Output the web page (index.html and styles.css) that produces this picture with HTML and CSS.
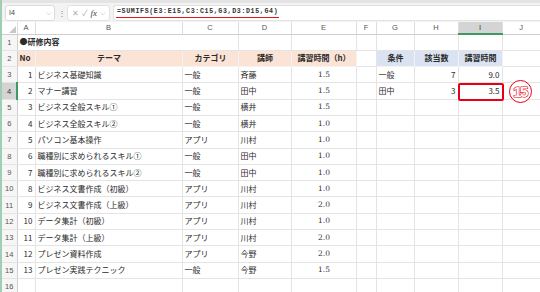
FILE: index.html
```html
<!DOCTYPE html>
<html lang="ja">
<head>
<meta charset="utf-8">
<link rel="stylesheet" href="styles.css">
</head>
<body>
<div class="app">
  <div class="topband"></div>
  <div class="fbar">
    <div class="namebox"><span>I4</span><span class="chev">⌵</span></div>
    <div class="dots">⋮</div>
    <div class="fxbox"><span class="ic">✕</span><span class="ic">✓</span><span class="fx">fx</span><span class="chev">⌵</span></div>
    <div class="formula"><span class="ftext">=SUMIFS(E3:E15,C3:C15,G3,D3:D15,G4)</span></div>
  </div>
  <table class="sheet">
    <colgroup>
      <col class="w-rh"><col class="w-a"><col class="w-b"><col class="w-c"><col class="w-d"><col class="w-e"><col class="w-f"><col class="w-g"><col class="w-h"><col class="w-i"><col class="w-j">
    </colgroup>
    <thead>
      <tr class="colhead">
        <th class="corner"><span class="tri"></span></th><th>A</th><th>B</th><th>C</th><th>D</th><th>E</th><th>F</th><th>G</th><th>H</th><th class="sel">I</th><th>J</th>
      </tr>
    </thead>
    <tbody>
      <tr><th class="rh">1</th><td colspan="2" class="title">●研修内容</td><td></td><td></td><td></td><td></td><td></td><td></td><td></td><td></td></tr>
      <tr class="hdr"><th class="rh">2</th><td class="pe l">No</td><td class="pe c">テーマ</td><td class="pe c">カテゴリ</td><td class="pe c">講師</td><td class="pe c">講習時間（h）</td><td></td><td class="bl c">条件</td><td class="bl c">該当数</td><td class="bl c">講習時間</td><td></td></tr>
      <tr><th class="rh">3</th><td class="r">1</td><td>ビジネス基礎知識</td><td>一般</td><td>斉藤</td><td class="num">1.5</td><td></td><td>一般</td><td class="r">7</td><td class="r">9.0</td><td></td></tr>
      <tr><th class="rh selr">4</th><td class="r">2</td><td>マナー講習</td><td>一般</td><td>田中</td><td class="num">1.5</td><td></td><td>田中</td><td class="r">3</td><td class="r mark">3.5<span class="redbox"></span><span class="badge">15</span></td><td></td></tr>
      <tr><th class="rh">5</th><td class="r">3</td><td>ビジネス全般スキル①</td><td>一般</td><td>横井</td><td class="num">1.5</td><td></td><td></td><td></td><td></td><td></td></tr>
      <tr><th class="rh">6</th><td class="r">4</td><td>ビジネス全般スキル②</td><td>一般</td><td>横井</td><td class="num">1.0</td><td></td><td></td><td></td><td></td><td></td></tr>
      <tr><th class="rh">7</th><td class="r">5</td><td>パソコン基本操作</td><td>アプリ</td><td>川村</td><td class="num">1.0</td><td></td><td></td><td></td><td></td><td></td></tr>
      <tr><th class="rh">8</th><td class="r">6</td><td>職種別に求められるスキル①</td><td>一般</td><td>田中</td><td class="num">1.0</td><td></td><td></td><td></td><td></td><td></td></tr>
      <tr><th class="rh">9</th><td class="r">7</td><td>職種別に求められるスキル②</td><td>一般</td><td>田中</td><td class="num">1.0</td><td></td><td></td><td></td><td></td><td></td></tr>
      <tr><th class="rh">10</th><td class="r">8</td><td>ビジネス文書作成（初級）</td><td>アプリ</td><td>川村</td><td class="num">1.0</td><td></td><td></td><td></td><td></td><td></td></tr>
      <tr><th class="rh">11</th><td class="r">9</td><td>ビジネス文書作成（上級）</td><td>アプリ</td><td>川村</td><td class="num">2.0</td><td></td><td></td><td></td><td></td><td></td></tr>
      <tr><th class="rh">12</th><td class="r">10</td><td>データ集計（初級）</td><td>アプリ</td><td>川村</td><td class="num">1.0</td><td></td><td></td><td></td><td></td><td></td></tr>
      <tr><th class="rh">13</th><td class="r">11</td><td>データ集計（上級）</td><td>アプリ</td><td>川村</td><td class="num">2.0</td><td></td><td></td><td></td><td></td><td></td></tr>
      <tr><th class="rh">14</th><td class="r">12</td><td>プレゼン資料作成</td><td>アプリ</td><td>今野</td><td class="num">2.0</td><td></td><td></td><td></td><td></td><td></td></tr>
      <tr><th class="rh">15</th><td class="r">13</td><td>プレゼン実践テクニック</td><td>一般</td><td>今野</td><td class="num">1.5</td><td></td><td></td><td></td><td></td><td></td></tr>
      <tr><th class="rh">16</th><td></td><td></td><td></td><td></td><td></td><td></td><td></td><td></td><td></td><td></td></tr>
    </tbody>
  </table>
</div>
</body>
</html>
```
FILE: styles.css
```css
* { box-sizing: border-box; }
html, body { margin: 0; padding: 0; background: #fff; }
body {
  width: 540px;
  height: 292px;
  overflow: hidden;
  font-family: "Noto Sans CJK JP", "Noto Sans", sans-serif;
  color: #2b2b2b;
}
.app {
  border-left: 2px solid #9fcfb2;
  height: 292px;
  display: flex;
  flex-direction: column;
  background: #f3f3f3;
}
.topband {
  height: 3px;
  background: #e4e4e4;
  flex: none;
}
.fbar {
  height: 19px;
  flex: none;
  display: flex;
  align-items: center;
  padding: 0 0 0 3px;
  gap: 3px;
  font-size: 7px;
  color: #555;
}
.namebox {
  width: 50px;
  height: 16px;
  background: #fff;
  border: 1px solid #dcdcdc;
  border-radius: 3px;
  display: flex;
  align-items: center;
  justify-content: space-between;
  padding: 0 3px 0 3px;
  font-family: "Liberation Sans", sans-serif;
  font-size: 7px;
  color: #444;
}
.chev { font-size: 7px; color: #666; line-height: 1; }
.dots { width: 6px; text-align: center; color: #777; font-size: 8px; }
.fxbox {
  width: 43px;
  height: 16px;
  background: #fff;
  border: 1px solid #e2e2e2;
  border-radius: 3px;
  display: flex;
  align-items: center;
  justify-content: space-around;
  padding: 0 2px;
  color: #9a9a9a;
}
.fxbox .ic { font-size: 8px; color: #b0b0b0; }
.fxbox .fx { font-family: "Liberation Serif", serif; font-style: italic; font-size: 9px; color: #444; }
.formula {
  flex: 1;
  height: 16px;
  background: #fff;
  border: 1px solid #e2e2e2;
  border-right: none;
  border-radius: 3px 0 0 3px;
  display: flex;
  align-items: center;
  padding-left: 2px;
}
.ftext {
  font-family: "Liberation Mono", monospace;
  font-size: 6.6px;
  letter-spacing: 0.65px;
  font-weight: bold;
  color: #333;
  border-bottom: 1.5px solid #e0141e;
  padding: 0 1px 1px 1px;
  line-height: 8px;
  white-space: nowrap;
}
.sheet {
  border-collapse: collapse;
  table-layout: fixed;
  width: 538px;
  background: #fff;
  font-size: 8px;
}
.w-rh { width: 15px; }
.w-a { width: 18px; }
.w-b { width: 147px; }
.w-c { width: 56px; }
.w-d { width: 53px; }
.w-e { width: 65px; }
.w-f { width: 20px; }
.w-g { width: 38px; }
.w-h { width: 44px; }
.w-i { width: 44px; }
.w-j { width: 38px; }
.colhead th {
  height: 12px;
  padding: 0;
  font-family: "Liberation Sans", sans-serif;
  font-weight: normal;
  font-size: 7.5px;
  color: #555;
  background: #fff;
  border-right: 1px solid #dedede;
  border-bottom: 1px solid #cfcfcf;
  text-align: center;
  line-height: 11px;
}
.colhead th.sel {
  background: #d4d4d4;
  border-bottom: 2px solid #3f9a62;
  color: #333;
}
.colhead th.corner {
  position: relative;
  background: #fff;
}
.tri {
  position: absolute;
  right: 1px;
  bottom: 1px;
  width: 0;
  height: 0;
  border-left: 7px solid transparent;
  border-bottom: 7px solid #c8c8c8;
}
tbody tr { height: 16.3px; }
tbody td {
  padding: 0 1px 0 2px;
  border: 1px solid #e4e4e4;
  white-space: nowrap;
  overflow: visible;
  vertical-align: middle;
  line-height: 14px;
  height: 16.3px;
  color: #2b2b2b;
}
th.rh {
  padding: 0;
  font-family: "Liberation Sans", sans-serif;
  font-weight: normal;
  font-size: 7.5px;
  color: #555;
  background: #f6f6f6;
  border-right: 1px solid #cfcfcf;
  border-bottom: 1px solid #e4e4e4;
  text-align: center;
}
th.rh.selr {
  background: #d4d4d4;
  border-right: 2px solid #3f9a62;
  color: #333;
}
td.title { font-weight: bold; padding-left: 2px; border-right-color: transparent; }
td.pe { background: #fbe3d5; font-weight: bold; border-color: #f3f3f3; }
td.bl { background: #dbe3f2; font-weight: bold; border-color: #f3f3f3; }
td.l { text-align: left; }
td.c { text-align: center; }
td.r { text-align: right; padding-right: 2px; }
td.num { text-align: center; font-family: "DejaVu Serif", serif; font-size: 7.5px; color: #333; }
td.mark { position: relative; overflow: visible; }
.redbox {
  position: absolute;
  left: -1px;
  top: 0;
  width: 46px;
  height: 18px;
  border: 2px solid #e60012;
  border-radius: 2px;
}
.badge {
  position: absolute;
  left: 50px;
  top: -3px;
  width: 23px;
  height: 23px;
  border: 1.5px solid #e60012;
  border-radius: 50%;
  background: #fff;
  display: flex;
  align-items: center;
  justify-content: center;
  font-family: "Liberation Sans", sans-serif;
  font-weight: bold;
  font-size: 15px;
  letter-spacing: -1.5px;
  color: #fff;
  -webkit-text-stroke: 1.2px #e60012;
  paint-order: stroke fill;
  text-align: center;
}
```
